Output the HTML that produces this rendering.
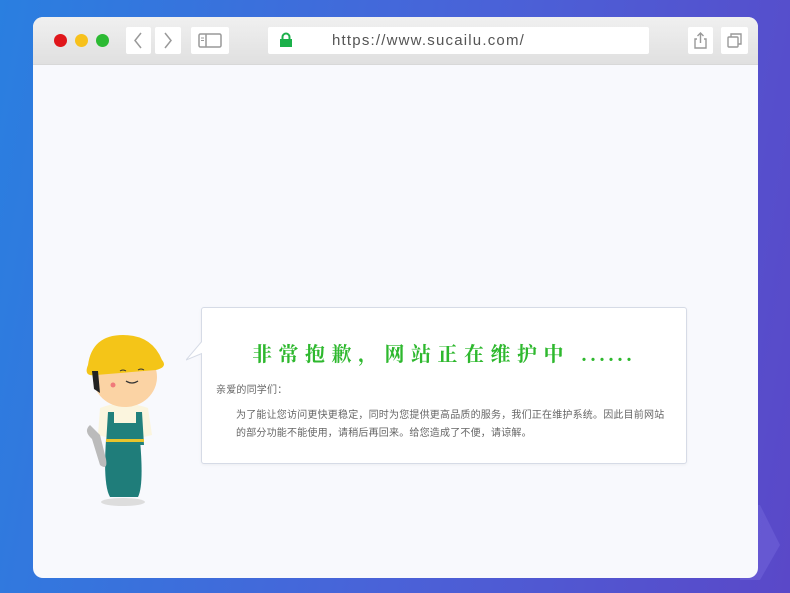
<!DOCTYPE html>
<html><head><meta charset="utf-8"><style>
*{margin:0;padding:0;box-sizing:border-box}
body{width:790px;height:593px;overflow:hidden;background:linear-gradient(100deg,#2a7fe0 0%,#4a62d8 55%,#5a48c8 100%);position:relative;font-family:"Liberation Sans","Noto Sans CJK SC",sans-serif}
.win{position:absolute;left:33px;top:17px;width:725px;height:561px;border-radius:10px;background:#f8f9fd;overflow:hidden}
.bar{position:absolute;left:0;top:0;width:725px;height:48px;background:linear-gradient(#f0f0f0,#e0e0e0);border-bottom:1px solid #d8d8d8}
.dot{position:absolute;top:17px;width:13px;height:13px;border-radius:50%}
.btn{position:absolute;top:10px;height:27px;background:#fff;border-radius:2px}
.url{position:absolute;left:235px;top:10px;width:381px;height:27px;background:#fff;border-radius:2px;font-size:15px;color:#555;letter-spacing:1.2px;line-height:27px;padding-left:64px}
.bub{position:absolute;left:168px;top:290px;width:486px;height:157px;background:#fff;border:1px solid #d6dbe6;border-radius:3px;box-shadow:0 1px 3px rgba(0,0,0,.05)}
.t{position:absolute;left:50px;top:30px;font-size:20px;font-weight:bold;color:#2eb82e;letter-spacing:6.5px;font-family:"Liberation Serif","Noto Serif CJK SC",serif;white-space:nowrap}
.t span{letter-spacing:4px}
.s{position:absolute;font-size:10px;color:#666;white-space:nowrap;letter-spacing:0.2px}
</style></head><body>
<svg style="position:absolute;left:740px;top:505px" width="45" height="80"><polygon points="0,0 20,0 40,40 20,75 0,75" fill="#7a6ee0" opacity=".4"/></svg>
<div class="win">
<div class="bar">
<div class="dot" style="left:21px;background:#e0161b"></div>
<div class="dot" style="left:42px;background:#f7c11c"></div>
<div class="dot" style="left:63px;background:#2cba33"></div>
<div class="btn" style="left:93px;width:25px"><svg width="25" height="27"><path d="M15 6 L9 13.5 L15 21" stroke="#999" stroke-width="1.5" fill="none"/></svg></div>
<div class="btn" style="left:122px;width:26px"><svg width="26" height="27"><path d="M10 6 L16 13.5 L10 21" stroke="#999" stroke-width="1.5" fill="none"/></svg></div>
<div class="btn" style="left:158px;width:38px"><svg width="38" height="27"><rect x="8" y="7" width="22" height="13" rx="1.5" stroke="#999" stroke-width="1.5" fill="none"/><line x1="15" y1="7" x2="15" y2="20" stroke="#999" stroke-width="1.5"/><line x1="10" y1="11" x2="13" y2="11" stroke="#999"/><line x1="10" y1="13.5" x2="13" y2="13.5" stroke="#999"/></svg></div>
<div class="url"><svg style="position:absolute;left:11px;top:5px" width="14" height="16"><path d="M3.5 7 V5 A3.5 3.5 0 0 1 10.5 5 V7" stroke="#1bb04a" stroke-width="2" fill="none"/><rect x="1" y="7" width="12" height="8" fill="#1bb04a"/></svg>https://www.sucailu.com/</div>
<div class="btn" style="left:655px;width:25px"><svg width="25" height="27"><path d="M9 12 H7 V21 H18 V12 H16" stroke="#999" stroke-width="1.4" fill="none"/><path d="M12.5 16 V6 M9.5 9 L12.5 6 L15.5 9" stroke="#999" stroke-width="1.4" fill="none"/></svg></div>
<div class="btn" style="left:688px;width:27px"><svg width="27" height="27"><rect x="7" y="10" width="10" height="10" rx="1" stroke="#999" stroke-width="1.4" fill="none"/><path d="M10 10 V7 H20 V17 H17" stroke="#999" stroke-width="1.4" fill="none"/></svg></div>
</div>
<svg style="position:absolute;left:45px;top:298px" width="100" height="195">
<ellipse cx="45" cy="187" rx="22" ry="4" fill="#ddd"/>
<path d="M28 125 Q25 170 32 182 L60 182 Q66 170 62 125 Z" fill="#1f7d7a"/>
<path d="M22 93 Q44 84 70 93 L74 120 Q46 128 20 120 Z" fill="#fbf5de"/>
<path d="M30 97 L36 97 L36 108 L58 108 L58 97 L64 97 L66 130 L28 130 Z" fill="#21807c"/>
<rect x="28" y="124" width="38" height="3" fill="#e8c42c"/>
<path d="M12 110 Q5 116 14 124 L22 150 Q30 156 28 144 L22 120 Z" fill="#bbb"/>
<ellipse cx="47" cy="62" rx="32" ry="30" fill="#fbd3a4"/>
<path d="M10 50 Q14 20 45 20 Q74 20 84 45 Q90 52 78 55 L18 60 Q5 62 10 50Z" fill="#f4c518"/>
<path d="M14 56 L20 56 L22 78 L16 74 Z" fill="#222"/>
<circle cx="35" cy="70" r="2.5" fill="#f07a7a"/>
<path d="M48 66 Q54 70 60 66" stroke="#333" stroke-width="1.3" fill="none"/>
<path d="M42 56 Q45 54 48 56 M60 55 Q63 53 66 55" stroke="#333" fill="none"/>
</svg>
<div class="bub">
<svg style="position:absolute;left:-16px;top:32px" width="18" height="22"><path d="M17 0 L0 20 L17 13" fill="#fff" stroke="#d6dbe6"/><rect x="16" y="0" width="3" height="22" fill="#fff"/></svg>
<div class="t">非常抱歉，网站正在维护中 <span>......</span></div>
<div class="s" style="left:14px;top:73px">亲爱的同学们：</div>
<div class="s" style="left:34px;top:98px">为了能让您访问更快更稳定，同时为您提供更高品质的服务，我们正在维护系统。因此目前网站</div>
<div class="s" style="left:34px;top:116px">的部分功能不能使用，请稍后再回来。给您造成了不便，请谅解。</div>
</div>
</div>
</body></html>
